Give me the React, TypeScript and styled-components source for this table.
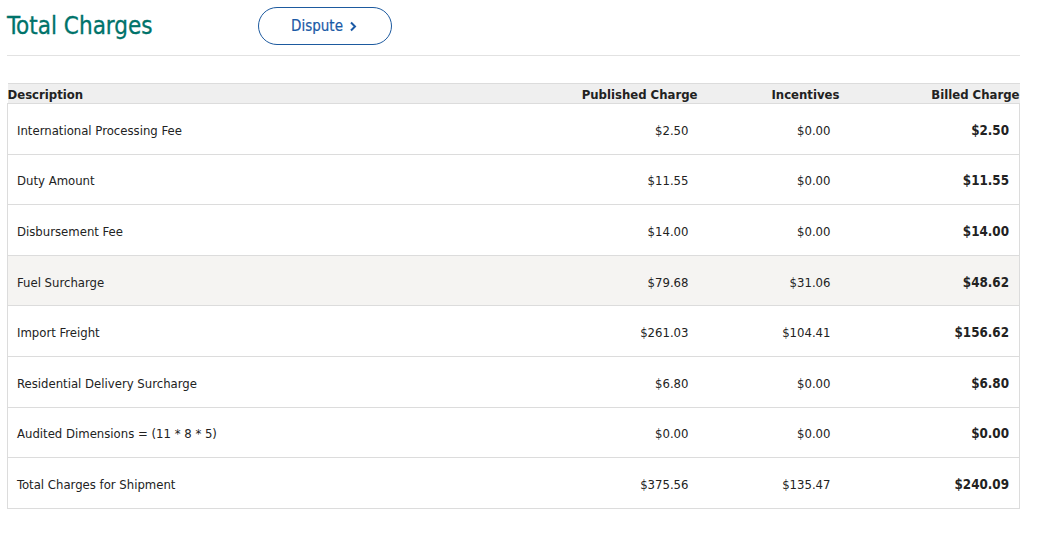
import React from "react";
import styled, { createGlobalStyle } from "styled-components";

const Global = createGlobalStyle`
  html, body { margin: 0; padding: 0; background: #fff; }
  body { font-family: "DejaVu Sans Condensed", "DejaVu Sans", Verdana, sans-serif; color: #222; }
`;

const Page = styled.div`
  width: 1013px;
  padding: 7px 0 0 7px;
`;

const TitleBar = styled.div`
  display: flex;
  align-items: center;
  height: 38px;
  padding-bottom: 10px;
  border-bottom: 1px solid #e2e2e2;
`;

const Title = styled.h1`
  margin: 0;
  width: 251px;
  font-size: 24px;
  font-weight: normal;
  color: #00736a;
  line-height: 38px;
  -webkit-text-stroke: 0.3px #00736a;
`;

const DisputeButton = styled.button`
  box-sizing: border-box;
  width: 134px;
  height: 38px;
  border: 1px solid #1d5a9f;
  border-radius: 19px;
  background: #fff;
  color: #1b5aa6;
  font-family: inherit;
  font-size: 15px;
  display: flex;
  align-items: center;
  justify-content: center;
  gap: 6px;
  padding: 0 2px 0 0;
  cursor: pointer;
  -webkit-text-stroke: 0.2px #1b5aa6;
`;

const Table = styled.table`
  margin-top: 27px;
  width: 1012px;
  border-collapse: collapse;
  table-layout: fixed;
  font-size: 13px;
`;

const HeadCell = styled.th<{ $align?: string }>`
  background: #efefef;
  border-top: 1px solid #dcdcdc;
  border-bottom: 1px solid #dcdcdc;
  height: 19px;
  padding: 0;
  font-size: 13px;
  font-weight: bold;
  text-align: ${(p) => p.$align || "left"};
  color: #222;
  vertical-align: bottom;
  line-height: 17px;
`;

const Row = styled.tr<{ $shade?: boolean }>`
  background: ${(p) => (p.$shade ? "#f5f4f2" : "#fff")};
  height: 50.6px;
  border-bottom: 1px solid #dcdcdc;
`;

const Cell = styled.td<{ $align?: string; $bold?: boolean; $first?: boolean; $last?: boolean }>`
  padding: 3px ${(p) => (p.$last ? "10px" : "9px")} 0 9px;
  text-align: ${(p) => p.$align || "left"};
  font-weight: ${(p) => (p.$bold ? "bold" : "normal")};
  font-size: ${(p) => (p.$bold ? "13.3px" : "13px")};
  color: #222;
  border-left: ${(p) => (p.$first ? "1px solid #dcdcdc" : "none")};
  border-right: ${(p) => (p.$last ? "1px solid #dcdcdc" : "none")};
  vertical-align: middle;
`;

const rows = [
  ["International Processing Fee", "$2.50", "$0.00", "$2.50"],
  ["Duty Amount", "$11.55", "$0.00", "$11.55"],
  ["Disbursement Fee", "$14.00", "$0.00", "$14.00"],
  ["Fuel Surcharge", "$79.68", "$31.06", "$48.62"],
  ["Import Freight", "$261.03", "$104.41", "$156.62"],
  ["Residential Delivery Surcharge", "$6.80", "$0.00", "$6.80"],
  ["Audited Dimensions = (11 * 8 * 5)", "$0.00", "$0.00", "$0.00"],
  ["Total Charges for Shipment", "$375.56", "$135.47", "$240.09"],
];

export default function App() {
  return (
    <Page>
      <Global />
      <TitleBar>
        <Title>Total Charges</Title>
        <DisputeButton>
          Dispute
          <svg width="8" height="11" viewBox="0 0 8 11">
            <path d="M2 1.5 L6 5.5 L2 9.5" fill="none" stroke="#1b5aa6" strokeWidth="2" />
          </svg>
        </DisputeButton>
      </TitleBar>
      <Table>
        <colgroup>
          <col style={{ width: "555px" }} />
          <col style={{ width: "135px" }} />
          <col style={{ width: "142px" }} />
          <col style={{ width: "180px" }} />
        </colgroup>
        <thead>
          <tr>
            <HeadCell>Description</HeadCell>
            <HeadCell $align="right">Published Charge</HeadCell>
            <HeadCell $align="right">Incentives</HeadCell>
            <HeadCell $align="right">Billed Charge</HeadCell>
          </tr>
        </thead>
        <tbody>
          {rows.map((r, i) => (
            <Row key={r[0]} $shade={i === 3}>
              <Cell $first>{r[0]}</Cell>
              <Cell $align="right">{r[1]}</Cell>
              <Cell $align="right">{r[2]}</Cell>
              <Cell $align="right" $bold $last>{r[3]}</Cell>
            </Row>
          ))}
        </tbody>
      </Table>
    </Page>
  );
}
